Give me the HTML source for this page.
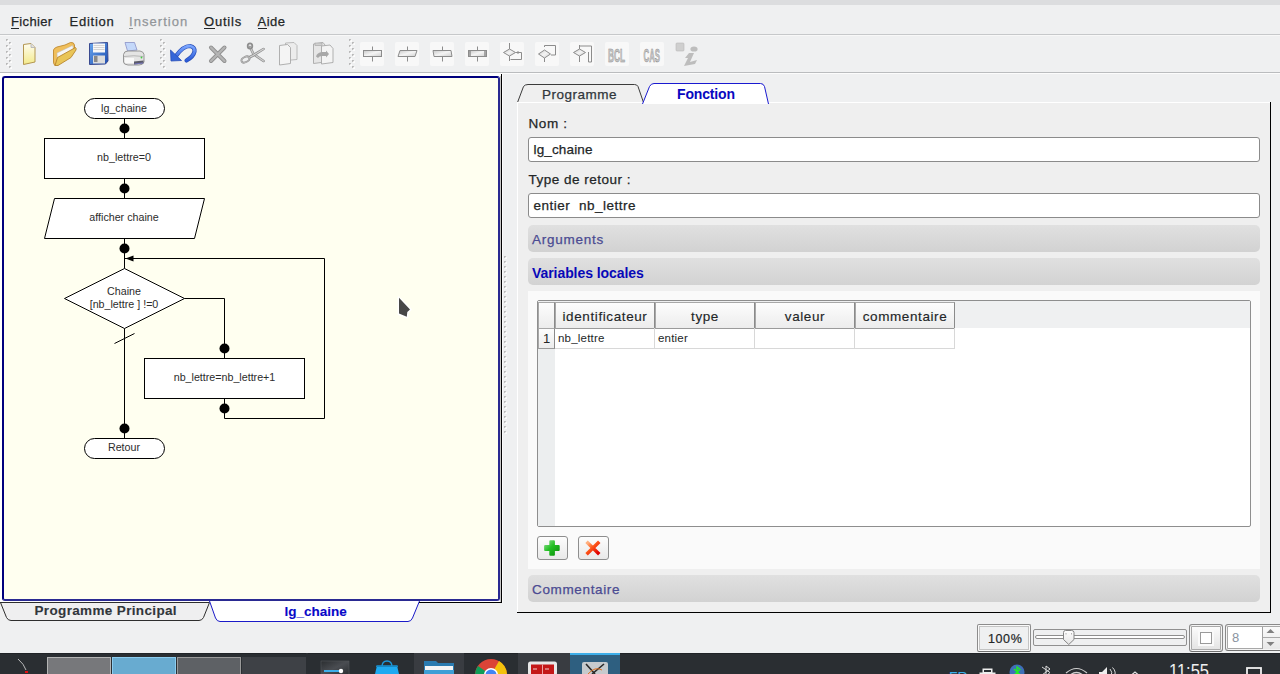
<!DOCTYPE html>
<html><head><meta charset="utf-8">
<style>
*{box-sizing:border-box;margin:0;padding:0}
html,body{width:1280px;height:674px;overflow:hidden;background:#eff0f1;font-family:"Liberation Sans",sans-serif;color:#232627;position:relative}
.a{position:absolute}
.t{position:absolute;white-space:nowrap;font-size:13.5px;line-height:16px;letter-spacing:0.3px;-webkit-text-stroke:0.25px currentColor}
.menu{position:absolute;top:13px;font-size:13px;line-height:18px;white-space:nowrap;letter-spacing:0.1px;-webkit-text-stroke:0.25px currentColor}
.ul{position:absolute;height:1px;background:currentColor;top:16px}
.tb{position:absolute;top:42px;width:24px;height:24px}
.grip{position:absolute;top:39px;width:6px;height:30px;background-image:radial-gradient(circle,#b8b8b8 0.8px,transparent 1px);background-size:3px 3.5px}
.bar{position:absolute;left:528px;width:732px;height:27px;border-radius:5px;background:linear-gradient(#e0e0e0,#d2d2d2)}
.inp{position:absolute;left:528px;width:732px;height:25px;border:1px solid #8b8b8b;border-radius:3px;background:#fff}
.hd{position:absolute;top:302px;height:27px;width:100px;border:1px solid #a8a8a8;border-right-color:#8a8a8a;border-bottom-color:#9a9a9a;background:linear-gradient(#fdfdfd,#ececec);font-size:13.5px;line-height:27px;text-align:center;letter-spacing:0.6px;color:#232627;-webkit-text-stroke:0.15px currentColor}
.cell{position:absolute;top:328px;height:21px;width:100px;border-right:1px solid #d8d8d8;border-bottom:1px solid #d8d8d8;font-size:11.5px;line-height:20px;padding-left:3px;letter-spacing:0.2px}
.btn{position:absolute;top:536px;width:31px;height:24px;border:1px solid #8e8e8e;border-radius:3px;background:linear-gradient(#fdfdfd,#e9e9e9)}
</style></head><body>
<div class="a" style="left:0;top:0;width:1280px;height:5px;background:#dcdddf"></div>

<span class="menu" style="left:11px;letter-spacing:0.35px">Fichier<i class="ul" style="left:0;width:8px;top:15px"></i></span>
<span class="menu" style="left:69.5px;letter-spacing:0.75px">Edition</span>
<span class="menu" style="left:129px;color:#92969a;letter-spacing:1.05px">Insertion<i class="ul" style="left:0;width:4px;top:15px"></i></span>
<span class="menu" style="left:204px;letter-spacing:0.8px">Outils<i class="ul" style="left:0;width:11px;top:15px"></i></span>
<span class="menu" style="left:257.5px;letter-spacing:0.5px">Aide<i class="ul" style="left:0;width:9px;top:15px"></i></span>

<div class="a" style="left:0;top:34px;width:1280px;height:1px;background:#c6c8ca"></div>
<div class="a" style="left:0;top:35px;width:1280px;height:1px;background:#f8f8f8"></div>
<div class="a" style="left:0;top:72px;width:1280px;height:1px;background:#babcbe"></div><div class="a" style="left:0;top:73px;width:1280px;height:1px;background:#fcfcfc"></div>

<!-- toolbar -->
<svg class="a" style="left:0;top:0" width="400" height="72"><rect x="6" y="39" width="2" height="2" fill="#c4c4c4"/><rect x="7" y="40" width="2" height="2" fill="#fcfcfc"/><rect x="6" y="39" width="1.5" height="1.5" fill="#b8b8b8"/><rect x="9" y="42" width="2" height="2" fill="#c4c4c4"/><rect x="10" y="43" width="2" height="2" fill="#fcfcfc"/><rect x="9" y="42" width="1.5" height="1.5" fill="#b8b8b8"/><rect x="6" y="45" width="2" height="2" fill="#c4c4c4"/><rect x="7" y="46" width="2" height="2" fill="#fcfcfc"/><rect x="6" y="45" width="1.5" height="1.5" fill="#b8b8b8"/><rect x="9" y="48" width="2" height="2" fill="#c4c4c4"/><rect x="10" y="49" width="2" height="2" fill="#fcfcfc"/><rect x="9" y="48" width="1.5" height="1.5" fill="#b8b8b8"/><rect x="6" y="51" width="2" height="2" fill="#c4c4c4"/><rect x="7" y="52" width="2" height="2" fill="#fcfcfc"/><rect x="6" y="51" width="1.5" height="1.5" fill="#b8b8b8"/><rect x="9" y="54" width="2" height="2" fill="#c4c4c4"/><rect x="10" y="55" width="2" height="2" fill="#fcfcfc"/><rect x="9" y="54" width="1.5" height="1.5" fill="#b8b8b8"/><rect x="6" y="57" width="2" height="2" fill="#c4c4c4"/><rect x="7" y="58" width="2" height="2" fill="#fcfcfc"/><rect x="6" y="57" width="1.5" height="1.5" fill="#b8b8b8"/><rect x="9" y="60" width="2" height="2" fill="#c4c4c4"/><rect x="10" y="61" width="2" height="2" fill="#fcfcfc"/><rect x="9" y="60" width="1.5" height="1.5" fill="#b8b8b8"/><rect x="6" y="63" width="2" height="2" fill="#c4c4c4"/><rect x="7" y="64" width="2" height="2" fill="#fcfcfc"/><rect x="6" y="63" width="1.5" height="1.5" fill="#b8b8b8"/><rect x="9" y="66" width="2" height="2" fill="#c4c4c4"/><rect x="10" y="67" width="2" height="2" fill="#fcfcfc"/><rect x="9" y="66" width="1.5" height="1.5" fill="#b8b8b8"/><rect x="160" y="39" width="2" height="2" fill="#c4c4c4"/><rect x="161" y="40" width="2" height="2" fill="#fcfcfc"/><rect x="160" y="39" width="1.5" height="1.5" fill="#b8b8b8"/><rect x="163" y="42" width="2" height="2" fill="#c4c4c4"/><rect x="164" y="43" width="2" height="2" fill="#fcfcfc"/><rect x="163" y="42" width="1.5" height="1.5" fill="#b8b8b8"/><rect x="160" y="45" width="2" height="2" fill="#c4c4c4"/><rect x="161" y="46" width="2" height="2" fill="#fcfcfc"/><rect x="160" y="45" width="1.5" height="1.5" fill="#b8b8b8"/><rect x="163" y="48" width="2" height="2" fill="#c4c4c4"/><rect x="164" y="49" width="2" height="2" fill="#fcfcfc"/><rect x="163" y="48" width="1.5" height="1.5" fill="#b8b8b8"/><rect x="160" y="51" width="2" height="2" fill="#c4c4c4"/><rect x="161" y="52" width="2" height="2" fill="#fcfcfc"/><rect x="160" y="51" width="1.5" height="1.5" fill="#b8b8b8"/><rect x="163" y="54" width="2" height="2" fill="#c4c4c4"/><rect x="164" y="55" width="2" height="2" fill="#fcfcfc"/><rect x="163" y="54" width="1.5" height="1.5" fill="#b8b8b8"/><rect x="160" y="57" width="2" height="2" fill="#c4c4c4"/><rect x="161" y="58" width="2" height="2" fill="#fcfcfc"/><rect x="160" y="57" width="1.5" height="1.5" fill="#b8b8b8"/><rect x="163" y="60" width="2" height="2" fill="#c4c4c4"/><rect x="164" y="61" width="2" height="2" fill="#fcfcfc"/><rect x="163" y="60" width="1.5" height="1.5" fill="#b8b8b8"/><rect x="160" y="63" width="2" height="2" fill="#c4c4c4"/><rect x="161" y="64" width="2" height="2" fill="#fcfcfc"/><rect x="160" y="63" width="1.5" height="1.5" fill="#b8b8b8"/><rect x="163" y="66" width="2" height="2" fill="#c4c4c4"/><rect x="164" y="67" width="2" height="2" fill="#fcfcfc"/><rect x="163" y="66" width="1.5" height="1.5" fill="#b8b8b8"/><rect x="349" y="39" width="2" height="2" fill="#c4c4c4"/><rect x="350" y="40" width="2" height="2" fill="#fcfcfc"/><rect x="349" y="39" width="1.5" height="1.5" fill="#b8b8b8"/><rect x="352" y="42" width="2" height="2" fill="#c4c4c4"/><rect x="353" y="43" width="2" height="2" fill="#fcfcfc"/><rect x="352" y="42" width="1.5" height="1.5" fill="#b8b8b8"/><rect x="349" y="45" width="2" height="2" fill="#c4c4c4"/><rect x="350" y="46" width="2" height="2" fill="#fcfcfc"/><rect x="349" y="45" width="1.5" height="1.5" fill="#b8b8b8"/><rect x="352" y="48" width="2" height="2" fill="#c4c4c4"/><rect x="353" y="49" width="2" height="2" fill="#fcfcfc"/><rect x="352" y="48" width="1.5" height="1.5" fill="#b8b8b8"/><rect x="349" y="51" width="2" height="2" fill="#c4c4c4"/><rect x="350" y="52" width="2" height="2" fill="#fcfcfc"/><rect x="349" y="51" width="1.5" height="1.5" fill="#b8b8b8"/><rect x="352" y="54" width="2" height="2" fill="#c4c4c4"/><rect x="353" y="55" width="2" height="2" fill="#fcfcfc"/><rect x="352" y="54" width="1.5" height="1.5" fill="#b8b8b8"/><rect x="349" y="57" width="2" height="2" fill="#c4c4c4"/><rect x="350" y="58" width="2" height="2" fill="#fcfcfc"/><rect x="349" y="57" width="1.5" height="1.5" fill="#b8b8b8"/><rect x="352" y="60" width="2" height="2" fill="#c4c4c4"/><rect x="353" y="61" width="2" height="2" fill="#fcfcfc"/><rect x="352" y="60" width="1.5" height="1.5" fill="#b8b8b8"/><rect x="349" y="63" width="2" height="2" fill="#c4c4c4"/><rect x="350" y="64" width="2" height="2" fill="#fcfcfc"/><rect x="349" y="63" width="1.5" height="1.5" fill="#b8b8b8"/><rect x="352" y="66" width="2" height="2" fill="#c4c4c4"/><rect x="353" y="67" width="2" height="2" fill="#fcfcfc"/><rect x="352" y="66" width="1.5" height="1.5" fill="#b8b8b8"/></svg>
<svg class="a" style="left:0;top:36px" width="720" height="36" viewBox="0 36 720 36">
<defs>
<linearGradient id="gdoc" x1="0" y1="0" x2="0" y2="1"><stop offset="0" stop-color="#fffdf0"/><stop offset="1" stop-color="#f3ea8a"/></linearGradient>
<linearGradient id="gfold" x1="0" y1="0" x2="0" y2="1"><stop offset="0" stop-color="#f7cf6a"/><stop offset="1" stop-color="#d9a23a"/></linearGradient>
<linearGradient id="gsave" x1="0" y1="0" x2="1" y2="1"><stop offset="0" stop-color="#6aa8f0"/><stop offset="1" stop-color="#1c4cb0"/></linearGradient>
<linearGradient id="gbox" x1="0" y1="0" x2="1" y2="1"><stop offset="0" stop-color="#c8c8c8"/><stop offset="0.5" stop-color="#f4f4f4"/><stop offset="1" stop-color="#d0d0d0"/></linearGradient>
<linearGradient id="gundo" x1="0" y1="0" x2="0" y2="1"><stop offset="0" stop-color="#7aa6ff"/><stop offset="1" stop-color="#2a5ad8"/></linearGradient>
</defs>
<!-- new -->
<path d="M23.5 44.5 L31 43.5 L35 47.5 L35 62 L23.5 64.5 Z" fill="url(#gdoc)" stroke="#b39650" stroke-width="1"/>
<path d="M31 43.5 L31 47.5 L35 47.5" fill="#e0e0e0" stroke="#b0b0b0" stroke-width="0.8"/>
<!-- open -->
<path d="M53.5 50 Q54 48 57 47 L65 45 L70.5 42.5 Q74 42 74.5 45 L74.5 48 L58 61 L55 65.5 Q53.5 64 53.5 62 Z" fill="#f0bf5c" stroke="#c08a30" stroke-width="0.9"/>
<path d="M57 53 L72.5 45.5 L73.5 49 L57.5 61 Z" fill="#f6f6f6" stroke="#bdbdbd" stroke-width="0.5"/>
<path d="M55 65.5 L57.5 57.5 L75.5 47.5 Q76.5 48 76 50 L71 57.5 L58 65.5 Z" fill="#e9c558" stroke="#b8862e" stroke-width="0.9"/>
<!-- save -->
<path d="M89.5 43.5 L107.5 42.5 L108 61 L105.5 64 L89.5 64.5 Z" fill="url(#gsave)" stroke="#3a4a90" stroke-width="1"/>
<rect x="93" y="43.5" width="12" height="9" fill="#f8f8f8"/>
<path d="M93.5 45.5 h11 M93.5 47.5 h11 M93.5 49.5 h11" stroke="#c4c4c4" stroke-width="0.7"/>
<rect x="93" y="55.5" width="12" height="8" fill="#dcdcdc"/>
<rect x="94" y="56" width="3.5" height="6" fill="#8a8a8a"/>
<!-- print -->
<path d="M125 42.5 L134.5 42.5 L137 50 L127.5 51 Z" fill="#c4d8fa" stroke="#8a92c8" stroke-width="0.8"/>
<path d="M123.5 54.5 Q124 51 128 51 L140 51 Q143.5 51.5 144 54.5 L144 62 Q143 65 139 65 L128 65 Q123.5 64.5 123.5 62 Z" fill="#e4e4e4" stroke="#8c8c8c" stroke-width="0.9"/>
<path d="M124 56.5 Q134 55 143.5 56.5" fill="none" stroke="#b0b0b0" stroke-width="0.9"/>
<rect x="125" y="58" width="9" height="5" fill="#f8f8f8"/>
<path d="M134 61.5 L143.5 60.5 L143.5 63.5 L134 64.5 Z" fill="#5a5a6a"/>
<path d="M134.5 64 L143 63" stroke="#7a7ad0" stroke-width="0.8"/>
<circle cx="141.5" cy="57.5" r="0.9" fill="#4c4"/>
<!-- undo -->
<path d="M176 56 Q183 46 190 46 Q195 47 194.5 51.5 Q193.5 56.5 186.5 60.5" fill="none" stroke="#2a4fb8" stroke-width="4.2" stroke-linecap="round"/>
<path d="M176 56 Q183 46 190 46 Q195 47 194.5 51.5 Q193.5 56.5 186.5 60.5" fill="none" stroke="url(#gundo)" stroke-width="2.8" stroke-linecap="round"/>
<path d="M170.5 50 L171 61 L181.5 60.5 Z" fill="#3566d8" stroke="#2a4fb8" stroke-width="0.8" stroke-linejoin="round"/>
<!-- x -->
<path d="M211 47.5 L224.5 61 M224.5 47.5 L211 61" stroke="#8e8e8e" stroke-width="4" stroke-linecap="round"/>
<path d="M211 47.5 L224.5 61 M224.5 47.5 L211 61" stroke="#b4b4b4" stroke-width="2.4" stroke-linecap="round"/>
<!-- scissors -->
<g fill="none" stroke-linecap="round">
<path d="M250 47 L253.5 54 L263.5 61" stroke="#8e8e8e" stroke-width="2.6"/>
<path d="M250 47 L253.5 54 L263.5 61" stroke="#cfcfcf" stroke-width="1.2"/>
<path d="M263.5 49 L253 55.5 L249 57.5" stroke="#8e8e8e" stroke-width="2.6"/>
<path d="M263.5 49 L253 55.5 L249 57.5" stroke="#d4d4d4" stroke-width="1.2"/>
<ellipse cx="250" cy="46" rx="2.3" ry="2.6" stroke="#8e8e8e" stroke-width="1.8"/>
<ellipse cx="245.5" cy="59.5" rx="4.3" ry="2.6" transform="rotate(-28 245.5 59.5)" stroke="#8e8e8e" stroke-width="1.8"/>
<ellipse cx="245.5" cy="59.5" rx="4.3" ry="2.6" transform="rotate(-28 245.5 59.5)" stroke="#c8c8c8" stroke-width="0.7"/>
</g>
<!-- copy -->
<path d="M285.5 43 L294 42.5 L297 45.5 L297 59.5 L285.5 60.5 Z" fill="#ececec" stroke="#b4b4b4" stroke-width="0.9"/>
<path d="M279.5 45.5 L287.5 44.5 L290.5 47.5 L290.5 63.5 L279.5 65 Z" fill="#f4f4f4" stroke="#a8a8a8" stroke-width="0.9"/>
<!-- paste -->
<path d="M313.5 44 L323 42.5 L325 45 L325 62 L313.5 63.5 Z" fill="#e6e6e6" stroke="#a8a8a8" stroke-width="0.9"/>
<rect x="315" y="43" width="7" height="2.5" fill="#d0d0d0" stroke="#a0a0a0" stroke-width="0.6"/>
<path d="M321.5 46 L330 45 L333 48.5 L333 62.5 L321.5 64 Z" fill="#f4f4f4" stroke="#a8a8a8" stroke-width="0.9"/>
<path d="M316 56.5 Q317 52.5 322 52 L326 52 L326 50.5 L329 54 L326 57.5 L326 56 L322 56 Q319 56 318 58 Z" fill="#a8a8a8"/>
<!-- flowchart tool boxes -->
<g>
<rect x="360" y="42" width="24" height="24" rx="2" fill="#f8f8f8"/>
<rect x="395" y="42" width="24" height="24" rx="2" fill="#f8f8f8"/>
<rect x="430" y="42" width="24" height="24" rx="2" fill="#f8f8f8"/>
<rect x="465" y="42" width="24" height="24" rx="2" fill="#f8f8f8"/>
<rect x="500" y="42" width="24" height="24" rx="2" fill="#f8f8f8"/>
<rect x="535" y="42" width="24" height="24" rx="2" fill="#f8f8f8"/>
<rect x="570" y="42" width="24" height="24" rx="2" fill="#f8f8f8"/>
<rect x="605" y="42" width="24" height="24" rx="2" fill="#f8f8f8"/>
<rect x="640" y="42" width="24" height="24" rx="2" fill="#f8f8f8"/>
</g>
<g stroke="#8c8c8c" stroke-width="1" fill="none">
<path d="M372.5 46.5 V50 M372.5 57 V61.5"/>
<rect x="363.5" y="50.5" width="18" height="6" fill="url(#gbox)"/>
<path d="M407.5 46.5 V50 M407.5 57 V61.5"/>
<path d="M400 50.5 H417 L415 56.5 H398 Z" fill="url(#gbox)"/>
<path d="M442.5 46.5 V50 M442.5 57 V61.5"/>
<path d="M433 50.5 H451 L452 56.5 H434 Z" fill="url(#gbox)"/>
<path d="M477.5 46.5 V50 M477.5 57 V61.5"/>
<rect x="468.5" y="50.5" width="18" height="6" fill="url(#gbox)"/>
<path d="M470 51 V56 M485 51 V56" stroke="#909090" stroke-width="1.5"/>
<!-- diamond loop 1 -->
<path d="M509.5 43 V49"/>
<path d="M509.5 49 L515.5 52.5 L509.5 56 L503.5 52.5 Z" fill="url(#gbox)"/>
<path d="M509.5 56 V61 M515.5 52.5 H521.5 V59.5 H510.5"/>
<path d="M518 51 V54"/>
<!-- diamond loop 2 -->
<path d="M544.5 47 V45.5 H555.5 V55 H551 M544.5 45.5"/>
<path d="M544.5 50 L550.5 54 L544.5 58 L538.5 54 Z" fill="url(#gbox)"/>
<path d="M544.5 58 V62"/>
<!-- diamond loop 3 -->
<path d="M579.5 45 V49 M579.5 46 H591.5 V62 H588.5 V52"/>
<path d="M579.5 49 L585.5 52.5 L579.5 56 L573.5 52.5 Z" fill="url(#gbox)"/>
<path d="M579.5 56 V62"/>
</g>
<text x="608" y="61.5" font-family="Liberation Sans, sans-serif" font-weight="bold" font-size="19" fill="#c8c8c8" stroke="#8a8a8a" stroke-width="0.6" textLength="17" lengthAdjust="spacingAndGlyphs">BCL</text>
<text x="643.5" y="61.5" font-family="Liberation Sans, sans-serif" font-weight="bold" font-size="19" fill="#c8c8c8" stroke="#8a8a8a" stroke-width="0.6" textLength="16.5" lengthAdjust="spacingAndGlyphs">CAS</text>
<!-- info -->
<rect x="676" y="43" width="8" height="8" rx="1" fill="#cfcfcf" stroke="#b8b8b8" stroke-width="0.6"/>
<ellipse cx="694" cy="49" rx="3.6" ry="2.6" fill="#bdbdbd"/>
<path d="M689 53 L694 53 L690 62 L697 60 L695 64 L684 66 L688 58 L685 58 Z" fill="#bdbdbd"/>
</svg>


<!-- left flowchart panel -->
<div class="a" style="left:0;top:73px;width:501px;height:529px;background:#fff"></div>
<div class="a" style="left:2px;top:76px;width:498px;height:525px;border:2px solid #00007e;border-right-color:#2a2a92;border-bottom-color:#2a2a92;background:#fffff0;border-radius:3px"></div>
<div class="a" style="left:500px;top:76px;width:1px;height:526px;background:#c8c8c8"></div><div class="a" style="left:502px;top:74px;width:1px;height:529px;background:#fbfbfb"></div><div class="a" style="left:501px;top:74px;width:1px;height:529px;background:#000"></div>
<svg class="a" style="left:0;top:0" width="500" height="600" viewBox="0 0 500 600">
<g fill="none" stroke="#000" stroke-width="1">
<rect x="84.5" y="98.5" width="80" height="20" rx="10" ry="10" fill="#fff"/>
<line x1="124.5" y1="118.5" x2="124.5" y2="138.5"/>
<rect x="44.5" y="138.5" width="160" height="40" fill="#fff"/>
<line x1="124.5" y1="178.5" x2="124.5" y2="198.5"/>
<path d="M54.5 198.5 L204.5 198.5 L194.5 238.5 L44.5 238.5 Z" fill="#fff"/>
<line x1="124.5" y1="238.5" x2="124.5" y2="268.5"/>
<path d="M124.5 268.5 L184.5 298.5 L124.5 328.5 L64.5 298.5 Z" fill="#fff"/>
<path d="M184.5 298.5 H224.5 V358.5"/>
<rect x="144.5" y="358.5" width="160" height="40" fill="#fff"/>
<path d="M224.5 398.5 V418.5 H324.5 V258.5 H124.5"/>
<line x1="124.5" y1="328.5" x2="124.5" y2="438.5"/>
<line x1="114.5" y1="343.5" x2="134.5" y2="333.5"/>
<rect x="84.5" y="438.5" width="80" height="20" rx="10" ry="10" fill="#fff"/>
</g>
<g fill="#000">
<circle cx="124.5" cy="128.5" r="5"/>
<circle cx="124.5" cy="188.5" r="5"/>
<circle cx="124.5" cy="248.5" r="5"/>
<circle cx="224.5" cy="348.5" r="5"/>
<circle cx="224.5" cy="408.5" r="5"/>
<circle cx="124.5" cy="428.5" r="5"/>
<path d="M125.5 258.5 L133.5 255.5 L133.5 261.5 Z"/>
</g>
<g font-family="Liberation Sans, sans-serif" font-size="10.7" fill="#2c2c2c" text-anchor="middle">
<text x="124" y="111.5">lg_chaine</text>
<text x="124" y="161">nb_lettre=0</text>
<text x="124" y="221">afficher chaine</text>
<text x="124" y="295">Chaine</text>
<text x="124" y="308">[nb_lettre ] !=0</text>
<text x="224.5" y="381">nb_lettre=nb_lettre+1</text>
<text x="124" y="451">Retour</text>
</g>
</svg>

<!-- bottom tabs -->
<svg class="a" style="left:0;top:600px" width="520" height="24" viewBox="0 600 520 24">
<path d="M0 602.5 L209.5 602.5 L203.5 617.5 Q202 620.5 199 620.5 L11 620.5 Q8 620.5 6.5 617.5 L0.5 602.5" fill="#efeff0" stroke="#2e2e2e" stroke-width="1"/>
<path d="M209.5 601 L215.5 618 Q217 621.5 220 621.5 L408 621.5 Q411 621.5 412.5 618 L419.5 601 Z" fill="#fff"/>
<path d="M209.5 601 L215.5 618 Q217 621.5 220 621.5 L408 621.5 Q411 621.5 412.5 618 L419.5 601" fill="none" stroke="#1a1ac8" stroke-width="1"/>
<path d="M419 602.5 H501.5 V600" fill="none" stroke="#000" stroke-width="1"/>
</svg>
<span class="t" style="left:34.5px;top:603px;font-weight:bold;-webkit-text-stroke:0.1px currentColor;color:#31363b;letter-spacing:0.35px">Programme Principal</span>
<span class="t" style="left:284.5px;top:603.5px;font-weight:bold;-webkit-text-stroke:0.1px currentColor;color:#0808c8;letter-spacing:0px">lg_chaine</span>
<svg class="a" style="left:502px;top:251px" width="14" height="190"><rect x="2" y="5" width="2" height="2" fill="#c8c8c8"/><rect x="3" y="6" width="2" height="2" fill="#fcfcfc"/><rect x="2" y="5" width="1.5" height="1.5" fill="#bcbcbc"/><rect x="2" y="10" width="2" height="2" fill="#c8c8c8"/><rect x="3" y="11" width="2" height="2" fill="#fcfcfc"/><rect x="2" y="10" width="1.5" height="1.5" fill="#bcbcbc"/><rect x="2" y="15" width="2" height="2" fill="#c8c8c8"/><rect x="3" y="16" width="2" height="2" fill="#fcfcfc"/><rect x="2" y="15" width="1.5" height="1.5" fill="#bcbcbc"/><rect x="2" y="20" width="2" height="2" fill="#c8c8c8"/><rect x="3" y="21" width="2" height="2" fill="#fcfcfc"/><rect x="2" y="20" width="1.5" height="1.5" fill="#bcbcbc"/><rect x="2" y="25" width="2" height="2" fill="#c8c8c8"/><rect x="3" y="26" width="2" height="2" fill="#fcfcfc"/><rect x="2" y="25" width="1.5" height="1.5" fill="#bcbcbc"/><rect x="2" y="30" width="2" height="2" fill="#c8c8c8"/><rect x="3" y="31" width="2" height="2" fill="#fcfcfc"/><rect x="2" y="30" width="1.5" height="1.5" fill="#bcbcbc"/><rect x="2" y="35" width="2" height="2" fill="#c8c8c8"/><rect x="3" y="36" width="2" height="2" fill="#fcfcfc"/><rect x="2" y="35" width="1.5" height="1.5" fill="#bcbcbc"/><rect x="2" y="40" width="2" height="2" fill="#c8c8c8"/><rect x="3" y="41" width="2" height="2" fill="#fcfcfc"/><rect x="2" y="40" width="1.5" height="1.5" fill="#bcbcbc"/><rect x="2" y="45" width="2" height="2" fill="#c8c8c8"/><rect x="3" y="46" width="2" height="2" fill="#fcfcfc"/><rect x="2" y="45" width="1.5" height="1.5" fill="#bcbcbc"/><rect x="2" y="50" width="2" height="2" fill="#c8c8c8"/><rect x="3" y="51" width="2" height="2" fill="#fcfcfc"/><rect x="2" y="50" width="1.5" height="1.5" fill="#bcbcbc"/><rect x="2" y="55" width="2" height="2" fill="#c8c8c8"/><rect x="3" y="56" width="2" height="2" fill="#fcfcfc"/><rect x="2" y="55" width="1.5" height="1.5" fill="#bcbcbc"/><rect x="2" y="60" width="2" height="2" fill="#c8c8c8"/><rect x="3" y="61" width="2" height="2" fill="#fcfcfc"/><rect x="2" y="60" width="1.5" height="1.5" fill="#bcbcbc"/><rect x="2" y="65" width="2" height="2" fill="#c8c8c8"/><rect x="3" y="66" width="2" height="2" fill="#fcfcfc"/><rect x="2" y="65" width="1.5" height="1.5" fill="#bcbcbc"/><rect x="2" y="70" width="2" height="2" fill="#c8c8c8"/><rect x="3" y="71" width="2" height="2" fill="#fcfcfc"/><rect x="2" y="70" width="1.5" height="1.5" fill="#bcbcbc"/><rect x="2" y="75" width="2" height="2" fill="#c8c8c8"/><rect x="3" y="76" width="2" height="2" fill="#fcfcfc"/><rect x="2" y="75" width="1.5" height="1.5" fill="#bcbcbc"/><rect x="2" y="80" width="2" height="2" fill="#c8c8c8"/><rect x="3" y="81" width="2" height="2" fill="#fcfcfc"/><rect x="2" y="80" width="1.5" height="1.5" fill="#bcbcbc"/><rect x="2" y="85" width="2" height="2" fill="#c8c8c8"/><rect x="3" y="86" width="2" height="2" fill="#fcfcfc"/><rect x="2" y="85" width="1.5" height="1.5" fill="#bcbcbc"/><rect x="2" y="90" width="2" height="2" fill="#c8c8c8"/><rect x="3" y="91" width="2" height="2" fill="#fcfcfc"/><rect x="2" y="90" width="1.5" height="1.5" fill="#bcbcbc"/><rect x="2" y="95" width="2" height="2" fill="#c8c8c8"/><rect x="3" y="96" width="2" height="2" fill="#fcfcfc"/><rect x="2" y="95" width="1.5" height="1.5" fill="#bcbcbc"/><rect x="2" y="100" width="2" height="2" fill="#c8c8c8"/><rect x="3" y="101" width="2" height="2" fill="#fcfcfc"/><rect x="2" y="100" width="1.5" height="1.5" fill="#bcbcbc"/><rect x="2" y="105" width="2" height="2" fill="#c8c8c8"/><rect x="3" y="106" width="2" height="2" fill="#fcfcfc"/><rect x="2" y="105" width="1.5" height="1.5" fill="#bcbcbc"/><rect x="2" y="110" width="2" height="2" fill="#c8c8c8"/><rect x="3" y="111" width="2" height="2" fill="#fcfcfc"/><rect x="2" y="110" width="1.5" height="1.5" fill="#bcbcbc"/><rect x="2" y="115" width="2" height="2" fill="#c8c8c8"/><rect x="3" y="116" width="2" height="2" fill="#fcfcfc"/><rect x="2" y="115" width="1.5" height="1.5" fill="#bcbcbc"/><rect x="2" y="120" width="2" height="2" fill="#c8c8c8"/><rect x="3" y="121" width="2" height="2" fill="#fcfcfc"/><rect x="2" y="120" width="1.5" height="1.5" fill="#bcbcbc"/><rect x="2" y="125" width="2" height="2" fill="#c8c8c8"/><rect x="3" y="126" width="2" height="2" fill="#fcfcfc"/><rect x="2" y="125" width="1.5" height="1.5" fill="#bcbcbc"/><rect x="2" y="130" width="2" height="2" fill="#c8c8c8"/><rect x="3" y="131" width="2" height="2" fill="#fcfcfc"/><rect x="2" y="130" width="1.5" height="1.5" fill="#bcbcbc"/><rect x="2" y="135" width="2" height="2" fill="#c8c8c8"/><rect x="3" y="136" width="2" height="2" fill="#fcfcfc"/><rect x="2" y="135" width="1.5" height="1.5" fill="#bcbcbc"/><rect x="2" y="140" width="2" height="2" fill="#c8c8c8"/><rect x="3" y="141" width="2" height="2" fill="#fcfcfc"/><rect x="2" y="140" width="1.5" height="1.5" fill="#bcbcbc"/><rect x="2" y="145" width="2" height="2" fill="#c8c8c8"/><rect x="3" y="146" width="2" height="2" fill="#fcfcfc"/><rect x="2" y="145" width="1.5" height="1.5" fill="#bcbcbc"/><rect x="2" y="150" width="2" height="2" fill="#c8c8c8"/><rect x="3" y="151" width="2" height="2" fill="#fcfcfc"/><rect x="2" y="150" width="1.5" height="1.5" fill="#bcbcbc"/><rect x="2" y="155" width="2" height="2" fill="#c8c8c8"/><rect x="3" y="156" width="2" height="2" fill="#fcfcfc"/><rect x="2" y="155" width="1.5" height="1.5" fill="#bcbcbc"/><rect x="2" y="160" width="2" height="2" fill="#c8c8c8"/><rect x="3" y="161" width="2" height="2" fill="#fcfcfc"/><rect x="2" y="160" width="1.5" height="1.5" fill="#bcbcbc"/><rect x="2" y="165" width="2" height="2" fill="#c8c8c8"/><rect x="3" y="166" width="2" height="2" fill="#fcfcfc"/><rect x="2" y="165" width="1.5" height="1.5" fill="#bcbcbc"/><rect x="2" y="170" width="2" height="2" fill="#c8c8c8"/><rect x="3" y="171" width="2" height="2" fill="#fcfcfc"/><rect x="2" y="170" width="1.5" height="1.5" fill="#bcbcbc"/><rect x="2" y="175" width="2" height="2" fill="#c8c8c8"/><rect x="3" y="176" width="2" height="2" fill="#fcfcfc"/><rect x="2" y="175" width="1.5" height="1.5" fill="#bcbcbc"/><rect x="2" y="180" width="2" height="2" fill="#c8c8c8"/><rect x="3" y="181" width="2" height="2" fill="#fcfcfc"/><rect x="2" y="180" width="1.5" height="1.5" fill="#bcbcbc"/></svg>

<!-- right tabs -->
<svg class="a" style="left:510px;top:80px" width="270" height="26" viewBox="0 0 270 26">
<path d="M7.5 22.5 L13.5 6.5 Q15 4.5 18 4.5 L124.5 4.5 Q127 4.5 128 6.5 L133.5 22.5" fill="#efefef" stroke="#3b3b3b" stroke-width="1"/>
</svg>
<span class="t" style="left:542px;top:87px;color:#31363b;letter-spacing:0.5px">Programme</span>
<!-- right panel frame -->
<div class="a" style="left:517px;top:102px;width:753px;height:510px;background:#efefef;border-top:1px solid #fff;border-left:1px solid #fff"></div>
<div class="a" style="left:1270px;top:102px;width:1px;height:511px;background:#000"></div>
<div class="a" style="left:517px;top:612px;width:754px;height:1px;background:#000"></div>

<svg class="a" style="left:510px;top:80px" width="270" height="26" viewBox="0 0 270 26">
<path d="M132 24 L139.5 6.5 Q141 3.5 144 3.5 L250.5 3.5 Q253.5 3.5 254.5 6.5 L259 24 Z" fill="#fff" stroke="none"/>
<path d="M132.5 24 L139.5 6.5 Q141 3.5 144 3.5 L250.5 3.5 Q253.5 3.5 254.5 6.5 L258.5 24" fill="none" stroke="#1a1ad0" stroke-width="1"/>
</svg>
<span class="t" style="left:677px;top:85.5px;font-size:14px;font-weight:bold;-webkit-text-stroke:0;color:#0808c0;letter-spacing:-0.15px">Fonction</span>
<span class="t" style="left:528.5px;top:116px;letter-spacing:0.6px">Nom :</span>
<div class="inp" style="top:137px"></div>
<span class="t" style="left:533.5px;top:142px;letter-spacing:0.15px">lg_chaine</span>
<span class="t" style="left:528.5px;top:172px;letter-spacing:0.5px">Type de retour :</span>
<div class="inp" style="top:193px"></div>
<span class="t" style="left:533.5px;top:198px;letter-spacing:0.52px">entier&nbsp; nb_lettre</span>
<div class="bar" style="top:225px"></div>
<span class="t" style="left:532px;top:232px;color:#4b4b92;letter-spacing:0.75px">Arguments</span>
<div class="bar" style="top:258px"></div>
<span class="t" style="left:532px;top:264.5px;font-size:14px;font-weight:bold;-webkit-text-stroke:0;color:#0808b8;letter-spacing:-0.07px">Variables locales</span>

<!-- variables panel -->
<div class="a" style="left:528px;top:291px;width:732px;height:278px;background:#fafafa"></div>
<div class="a" style="left:537px;top:300px;width:714px;height:227px;border:1px solid #8e8e8e;border-radius:2px;background:#fff"></div>
<div class="a" style="left:538px;top:301px;width:712px;height:27px;background:#eff0f1"></div>
<div class="a" style="left:538px;top:328px;width:17px;height:198px;background:#eceeef"></div>
<div class="hd" style="left:538px;width:17px;"></div>
<div class="hd" style="left:555px">identificateur</div>
<div class="hd" style="left:655px">type</div>
<div class="hd" style="left:755px">valeur</div>
<div class="hd" style="left:855px">commentaire</div>
<div class="hd" style="left:538px;top:328px;width:17px;height:21px;line-height:20px;font-size:13px;padding-top:0;-webkit-text-stroke:0;letter-spacing:0">1</div>
<div class="cell" style="left:555px">nb_lettre</div>
<div class="cell" style="left:655px">entier</div>
<div class="cell" style="left:755px"></div>
<div class="cell" style="left:855px"></div>

<div class="btn" style="left:537px"><svg width="31" height="24" viewBox="537 536 31 24" style="position:absolute;left:-1px;top:-1px"><defs><linearGradient id="gpl" x1="0" y1="0" x2="1" y2="1"><stop offset="0" stop-color="#9ee09e"/><stop offset="0.45" stop-color="#22c022"/><stop offset="1" stop-color="#0a8a0a"/></linearGradient><linearGradient id="gx" x1="0" y1="0" x2="1" y2="1"><stop offset="0" stop-color="#ffb080"/><stop offset="0.4" stop-color="#ff5a1a"/><stop offset="1" stop-color="#e00000"/></linearGradient></defs>
<path d="M550.3 540.2 h3.6 q1 0 1 1 v3.7 h3.8 q1 0 1 1 v4 q0 1 -1 1 h-3.8 v3.8 q0 1 -1 1 h-3.6 q-1 0 -1 -1 v-3.8 h-4.2 q-1 0 -1 -1 v-4 q0 -1 1 -1 h4.2 v-3.7 q0 -1 1 -1 z" fill="url(#gpl)"/></svg></div>
<div class="btn" style="left:578px"><svg width="31" height="24" viewBox="578 536 31 24" style="position:absolute;left:-1px;top:-1px"><path d="M587.8 543 L598 553 M598 543 L587.8 553" stroke="url(#gx)" stroke-width="3.5" stroke-linecap="square" fill="none"/></svg></div>

<div class="bar" style="top:575px"></div>
<span class="t" style="left:532px;top:582px;color:#4b4b92;letter-spacing:0.65px">Commentaire</span>

<!-- status bar -->
<div class="a" style="left:977px;top:624px;width:54px;height:28px;border:1px solid #8c8c8c;border-bottom-color:#707070;border-radius:2px;background:#eff0f1;box-shadow:inset 0 0 0 1px #fafafa,inset 0 0 0 2px #c4c4c4"></div>
<span class="t" style="left:988px;top:631px;font-size:12.5px;letter-spacing:0.6px;-webkit-text-stroke:0.2px currentColor">100%</span>
<div class="a" style="left:1033px;top:629px;width:154px;height:17px;border:1px solid #909090;border-radius:2px;background:#eff0f1"></div>
<div class="a" style="left:1035px;top:635px;width:150px;height:4px;border:1px solid #8e8e8e;border-radius:2px;background:#fff"></div>
<svg class="a" style="left:1062px;top:629px" width="14" height="17" viewBox="0 0 14 17"><defs><linearGradient id="ghd" x1="0" y1="0" x2="0" y2="1"><stop offset="0" stop-color="#fff"/><stop offset="1" stop-color="#e4e4e4"/></linearGradient></defs><path d="M1.5 3.5 Q1.5 1.5 3.5 1.5 h6 q2.5 0 2.5 2 v7 l-5.25 5 l-5.25 -5 z" fill="url(#ghd)" stroke="#858585"/><path d="M4 4 v1.5 M9.5 4 v1.5" stroke="#a0a0a0" stroke-width="0.8"/></svg>
<div class="a" style="left:1189px;top:624px;width:34px;height:28px;border:1px solid #8a8a8a;border-bottom-color:#707070;border-radius:3px;background:linear-gradient(#fdfdfd,#e2e2e2);box-shadow:inset 0 0 0 1px #f4f4f4,inset 0 0 0 2px #a8a8a8"></div>
<div class="a" style="left:1198px;top:630px;width:16px;height:16px;background:#fafafa"></div>
<div class="a" style="left:1200px;top:632px;width:12px;height:12px;border:1px solid #9a9a9a;background:#fff"></div>
<div class="a" style="left:1225px;top:624px;width:60px;height:27px;border:1px solid #8a8a8a;border-bottom-color:#707070;border-radius:3px;background:#fff;box-shadow:inset 0 0 0 1px #f4f4f4,inset 0 0 0 2px #a8a8a8"></div>
<div class="a" style="left:1262px;top:627px;width:18px;height:22px;background:linear-gradient(#fafafa,#e8e8e8);border-left:1px solid #a0a0a0"></div>
<div class="a" style="left:1263px;top:637px;width:17px;height:1px;background:#a8a8a8"></div>
<span class="t" style="left:1232px;top:630px;color:#8a93a0;font-size:13px;-webkit-text-stroke:0">8</span>
<svg class="a" style="left:1262px;top:626px" width="18" height="22" viewBox="0 0 18 22"><path d="M4.5 7 L8.5 3 L12.5 7 Z M4.5 16 L8.5 20 L12.5 16 Z" fill="#808080"/></svg>

<svg class="a" style="left:390px;top:290px" width="30" height="35" viewBox="390 290 30 35"><path d="M398.6 297.3 L410.7 309.5 L407.8 312.3 L407.3 317.5 L398.6 314 Z" fill="none" stroke="#fff" stroke-width="2" stroke-linejoin="round"/><path d="M399 297.8 L410 309.5 L407.3 312 L406.8 316.7 L399 313.5 Z" fill="#474747"/></svg>
<!-- taskbar -->
<svg class="a" style="left:0;top:652px" width="1280" height="22" viewBox="0 652 1280 22">
<rect x="0" y="653" width="1280" height="21" fill="#2a2e32"/>
<rect x="0" y="653" width="1280" height="1" fill="#202327"/>
<path d="M18 659 Q24 664 26 670" fill="none" stroke="#c8c8c8" stroke-width="0.9"/>
<rect x="25" y="671" width="3" height="2" fill="#e01010"/>
<rect x="47.5" y="657.5" width="63" height="20" fill="#77787b" stroke="#b4b4b4"/>
<rect x="112.5" y="657.5" width="63" height="20" fill="#68abd0" stroke="#8ccdf0"/>
<rect x="177.5" y="657.5" width="63" height="20" fill="#5e6165" stroke="#9a9a9a"/>
<rect x="242" y="657" width="64" height="20" fill="#3e4146"/>
<rect x="306" y="653" width="2" height="21" fill="#2a2e32"/>
<!-- slider icon -->
<defs><linearGradient id="gsl" x1="0" y1="0" x2="1" y2="1"><stop offset="0" stop-color="#2a2d30"/><stop offset="0.5" stop-color="#4a4d52"/><stop offset="1" stop-color="#2a2d30"/></linearGradient></defs>
<rect x="321" y="661" width="28" height="14" fill="url(#gsl)" stroke="#55585c" stroke-width="0.6"/>
<rect x="324" y="670" width="18" height="2" fill="#3daee9"/>
<circle cx="341" cy="671" r="2.2" fill="#fff"/>
<!-- bag -->
<path d="M382 667 Q382 661 387 661 Q392 661 392 667" fill="none" stroke="#1d99dd" stroke-width="1.3"/>
<path d="M377 665.5 L397 665.5 L399 674 L375 674 Z" fill="#1eaaf1"/>
<rect x="376" y="665.5" width="22" height="1.5" fill="#1788c4"/>
<!-- folder highlight -->
<rect x="414" y="653" width="50" height="21" fill="#393c41"/>
<path d="M424 661 L436 661 L438 663 L454 663 L454 674 L424 674 Z" fill="#2a7bb0"/>
<rect x="425" y="666" width="28" height="4" fill="#f4f4f4"/>
<rect x="424" y="670" width="30" height="4" fill="#3e9fd6"/>
<!-- chrome -->
<circle cx="491" cy="675" r="16" fill="#db4437"/>
<path d="M491 675 L507 675 A16 16 0 0 0 499 661.1 Z" fill="#f4c20d"/>
<path d="M491 675 L475 675 A16 16 0 0 1 478 666 Z" fill="#0f9d58"/>
<circle cx="491" cy="675" r="7" fill="#fff"/>
<circle cx="491" cy="675" r="5.5" fill="#4285f4"/>
<!-- red app -->
<rect x="518" y="653" width="52" height="21" fill="#393c41"/>
<rect x="528" y="661.5" width="29" height="14" rx="2.5" fill="#e8e8e8"/>
<rect x="531" y="664.5" width="23" height="11" fill="#c41818"/>
<rect x="542" y="664.5" width="1" height="10" fill="#f0a0a0"/>
<path d="M533 669 h4 M545 669 h4" stroke="#fff" stroke-width="0.8"/>
<!-- active app -->
<rect x="570" y="653" width="50" height="21" fill="#2e5f80"/>
<rect x="570" y="653" width="50" height="2" fill="#3daee9"/>
<rect x="582" y="662" width="26" height="14" rx="2" fill="#c6cacd"/>
<path d="M586 664 L595 674 M604 664 L592 674" stroke="#2a2a2a" stroke-width="1.6"/>
<path d="M588 674 Q595 666 602 670" fill="none" stroke="#e07020" stroke-width="1"/>
<!-- tray -->
<text x="949" y="682" font-family="Liberation Sans, sans-serif" font-size="14" fill="#3daee9">FR</text>
<path d="M982.5 668.5 h10 v4 h3 v3 h-16 v-3 h3 z" fill="#eeeeee"/>
<rect x="984" y="670" width="7" height="2" fill="#2a2e32"/>
<circle cx="1017" cy="672" r="7.5" fill="#3f6fb8"/>
<path d="M1014 669 L1020 674.5 L1017 677 L1017 667 L1020 669.5 L1014 675" fill="none" stroke="#22ee22" stroke-width="1.3"/>
<path d="M1042 667 L1050 672.5 L1046 676 L1046 666 L1050 669 L1042 675" fill="none" stroke="#dcdcdc" stroke-width="1"/>
<path d="M1066 673 Q1076.5 664 1087 673" fill="none" stroke="#cfcfcf" stroke-width="1.2"/>
<path d="M1069 676 Q1076.5 669 1084 676" fill="none" stroke="#cfcfcf" stroke-width="1.2"/>
<path d="M1099 672 h3 l5 -5 v8 h-8 z" fill="#eeeeee"/>
<path d="M1110 669 Q1113 672 1111 676 M1112.5 667.5 Q1117 672 1114 677" fill="none" stroke="#dcdcdc" stroke-width="1"/>
<path d="M1131.5 675 L1135 672 L1138.5 675" fill="none" stroke="#e0e0e0" stroke-width="1.2"/>
<text x="1169" y="676.5" font-family="Liberation Sans, sans-serif" font-size="18" fill="#eff0f1" textLength="40" lengthAdjust="spacingAndGlyphs">11:55</text>
<rect x="1247" y="668" width="14" height="10" fill="none" stroke="#f0f0f0" stroke-width="1.8"/>
</svg>

</body></html>
